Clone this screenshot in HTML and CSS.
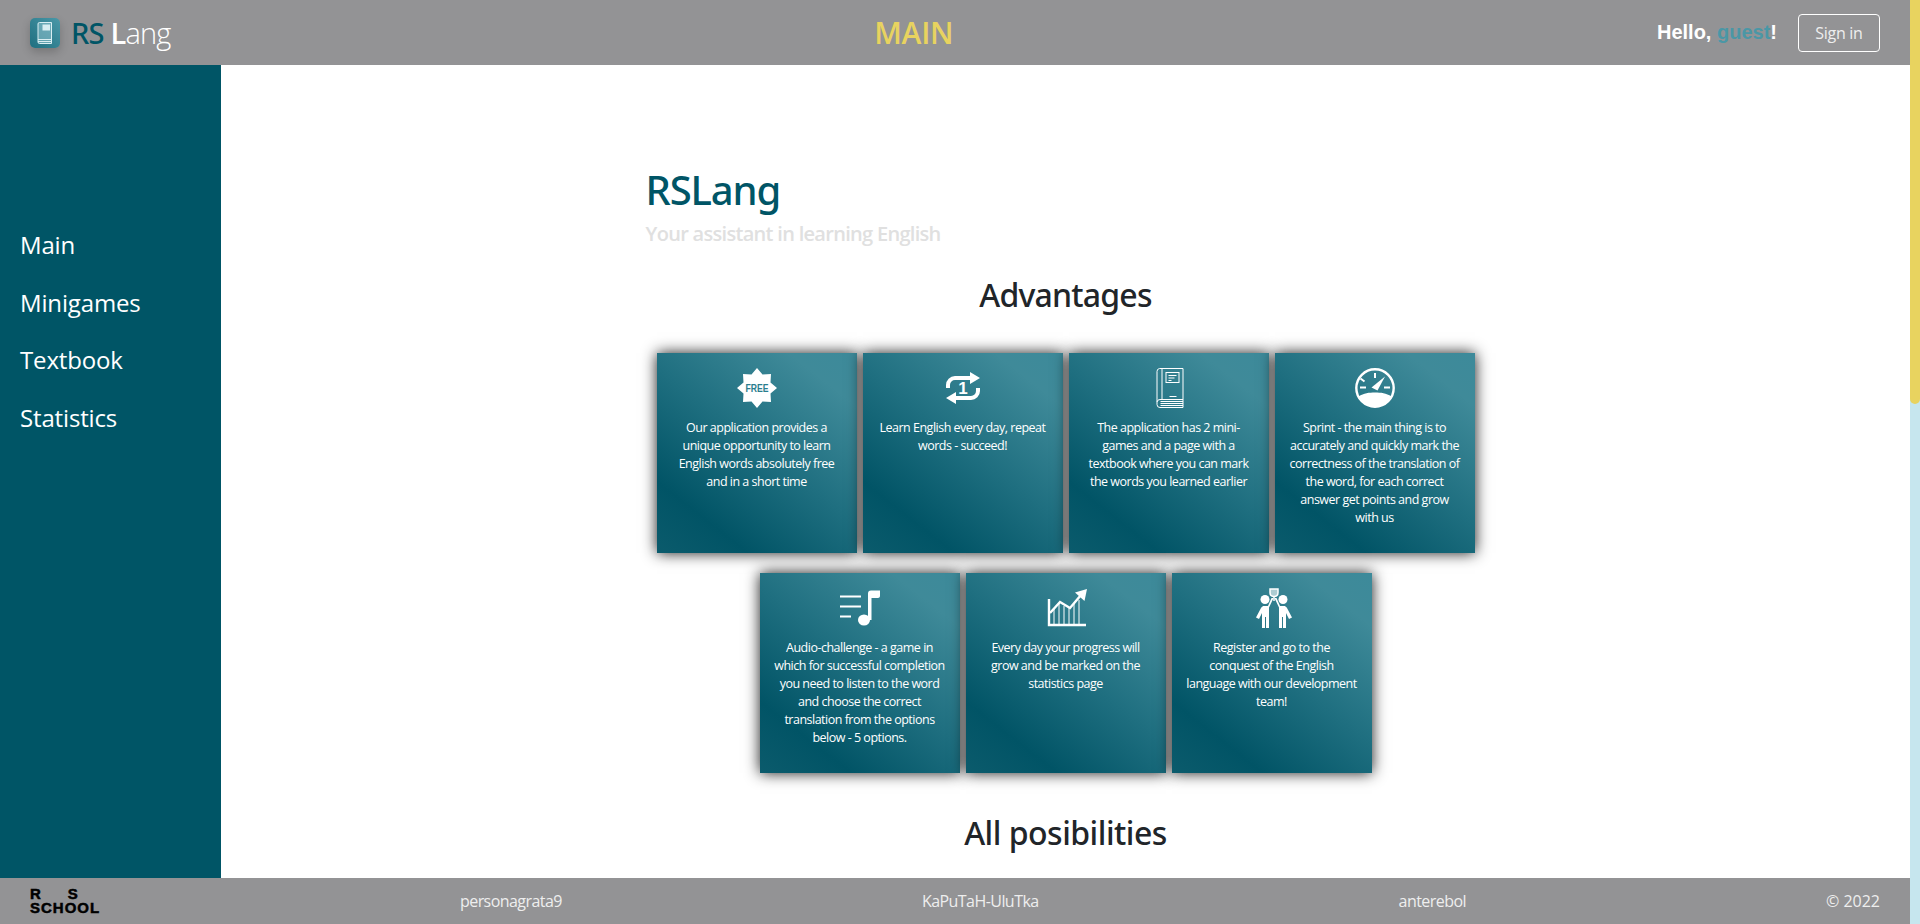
FILE: index.html
```html
<!DOCTYPE html>
<html>
<head>
  <title>RS Lang</title>
  <link rel="stylesheet" href="styles.css">
</head>
<body>
  <div class="page">
    <header class="banner">
      <a class="logo">
        <span class="logoIcon">
          <svg viewBox="0 0 30 30" width="30" height="30" fill="none" stroke="#d9eef2" stroke-width="1">
            <path d="M9.500 4.500h12v21h-12a1.500 1.500 0 0 1-1.500-1.500V6a1.500 1.500 0 0 1 1.500-1.500z" fill="#8fc3cd" fill-opacity=".55"/>
            <rect x="13" y="7" width="6.500" height="5" fill="#d9eef2"/>
            <path d="M8 21.500h13.500M8 23.500h13.500"/>
          </svg>
        </span>
        <span class="logoText"><span class="logoRs">RS</span> <b>L</b>ang</span>
      </a>
      <div class="pageTitle">MAIN</div>
      <div class="userBox">
        <span class="hello">Hello, <span class="guest">guest</span>!</span>
        <button class="signIn">Sign in</button>
      </div>
    </header>

    <div class="middle">
      <nav class="sidebar">
        <a>Main</a>
        <a>Minigames</a>
        <a>Textbook</a>
        <a>Statistics</a>
      </nav>

      <main class="content">
        <div class="container">
          <h1>RSLang</h1>
          <p class="subtitle">Your assistant in learning English</p>
          <h2>Advantages</h2>

          <div class="cards">
            <div class="card">
              <svg class="cardIcon" viewBox="0 0 40 40">
                <polygon fill="#fff" points="20,0 25.500,6.500 34,6 33.500,14.500 40,20 33.500,25.500 34,34 25.500,33.500 20,40 14.500,33.500 6,34 6.500,25.500 0,20 6.500,14.500 6,6 14.500,6.500"/>
                <text class="freeText" x="20" y="24" text-anchor="middle" textLength="23" lengthAdjust="spacingAndGlyphs">FREE</text>
              </svg>
              <p>Our application provides a unique opportunity to learn English words absolutely free and in a short time</p>
            </div>

            <div class="card">
              <svg class="cardIcon" viewBox="0 0 40 40">
                <path d="M5 20v-3a7 7 0 0 1 7-7h17M35 20v3a7 7 0 0 1-7 7H11" fill="none" stroke="#fff" stroke-width="4"/>
                <path d="M27 4l10 6-10 6zM13 24L3 30l10 6z" fill="#fff"/>
                <text class="repeatText" x="20" y="26" text-anchor="middle">1</text>
              </svg>
              <p>Learn English every day, repeat words - succeed!</p>
            </div>

            <div class="card">
              <svg class="cardIcon" viewBox="0 0 40 40" fill="none" stroke="#fff" stroke-width="1">
                <g transform="translate(1.500 0)">
                  <path d="M9 .5h23.500v39H9.500a3 3 0 0 1-3-3v-33a3 3 0 0 1 2.500-3z"/>
                  <path d="M11.500 .5v31M6.500 34a3 3 0 0 1 3-2.500h23"/>
                  <path d="M10 33.500h22.500M10 35.500h22.500M10 37.500h22.500"/>
                  <rect x="15.500" y="4.500" width="13" height="10"/>
                  <path d="M18 7.500h8M18 10h6M18 12.500h3M19 28.500h7"/>
                </g>
              </svg>
              <p>The application has 2 mini-games and a page with a textbook where you can mark the words you learned earlier</p>
            </div>

            <div class="card">
              <svg class="cardIcon" viewBox="0 0 40 40" fill="none" stroke="#fff">
                <circle cx="20" cy="20" r="18.700" stroke-width="2.400"/>
                <path d="M3.500 28.500C9 25 14 24.500 20 24.500s11 .5 16.500 4A18.700 18.700 0 0 1 3.500 28.500z" fill="#fff" stroke="none"/>
                <path d="M20 5v5M5.500 10.500l4 3M5 19.500h6M29 19.500h6" stroke-width="2"/>
                <path d="M16.500 19.500L30 8.500l-7.500 14z" fill="#fff" stroke="none"/>
              </svg>
              <p>Sprint - the main thing is to accurately and quickly mark the correctness of the translation of the word, for each correct answer get points and grow with us</p>
            </div>

            <div class="card">
              <svg class="cardIcon" viewBox="0 0 40 40" fill="none" stroke="#fff">
                <path d="M0 8.500h21M0 18.500h21M0 28.500h11" stroke-width="2"/>
                <ellipse cx="24" cy="32" rx="6" ry="5.500" fill="#fff" stroke="none"/>
                <path d="M28 32V5.500c0-2 1-3 3-3h9v5.500c0 1-1 2-2 2h-6.500V32z" fill="#fff" stroke="none"/>
              </svg>
              <p>Audio-challenge - a game in which for successful completion you need to listen to the word and choose the correct translation from the options below - 5 options.</p>
            </div>

            <div class="card">
              <svg class="cardIcon iconWide" viewBox="0 0 40 40" fill="none" stroke="#fff">
                <g transform="translate(2 0)">
                  <path d="M1 11v26h37" stroke-width="2.400"/>
                  <path d="M6 21v16M11 15v22M16 18v19M21 20v17M26 16v21M31 12v25" stroke-width="1"/>
                  <path d="M2 25L12 14l10 6 11-13" stroke-width="2.400"/>
                  <path d="M27 4.500L39 1l-2.500 12z" fill="#fff" stroke="none"/>
                </g>
              </svg>
              <p>Every day your progress will grow and be marked on the statistics page</p>
            </div>

            <div class="card">
              <svg class="cardIcon iconWide" viewBox="0 0 40 40" fill="none" stroke="#fff">
                <g transform="translate(2 0)">
                  <path d="M16 1h8v3.500c0 2.500-1.500 4-4 4s-4-1.500-4-4z" fill="#fff" fill-opacity=".6" stroke-width="1.500"/>
                  <path d="M20 8.500V13" stroke-width="1.500"/>
                  <circle cx="11" cy="11.500" r="4.500" fill="#fff" stroke="none"/>
                  <circle cx="29" cy="11.500" r="4.500" fill="#fff" stroke="none"/>
                  <path d="M19.500 10l-4.500 9.500V40h-3V29h-1v11H8V25l-3 6-3-1.500 5-9.500c1-1.500 2-2 3-2h4l3.500-8zM20.500 10l4.500 9.500V40h3V29h1v11h3V25l3 6 3-1.500-5-9.500c-1-1.500-2-2-3-2h-4l-3.500-8z" fill="#fff" stroke="none"/>
                </g>
              </svg>
              <p>Register and go to the<br>conquest of the English<br>language with our development<br>team!</p>
            </div>
          </div>

          <h2 class="allTitle">All posibilities</h2>
        </div>
      </main>
    </div>

    <footer class="footer">
      <div class="school"><span>R&nbsp;&nbsp;&nbsp;&nbsp;&nbsp;S</span><span>SCHOOL</span></div>
      <a>personagrata9</a>
      <a>KaPuTaH-UluTka</a>
      <a>anterebol</a>
      <span class="year">© 2022</span>
    </footer>
  </div>

  <div class="scrollBar">
    <div class="scrollThumb"></div>
  </div>
</body>
</html>
```

FILE: styles.css
```css
* {
  box-sizing: border-box;
}

body {
  margin: 0;
  height: 100vh;
  overflow: hidden;
  font-family: "Open Sans", "Noto Sans", sans-serif;
  background-color: #fff;
  display: flex;
}

.page {
  flex: 1;
  min-width: 0;
  display: flex;
  flex-direction: column;
}

.scrollBar {
  width: 10px;
  flex-shrink: 0;
  background-color: #c6e6ee;
}

.scrollThumb {
  height: 404px;
  background-color: #e8d35f;
  border-radius: 0 0 5px 5px;
}

.banner {
  height: 65px;
  flex-shrink: 0;
  padding: 0 30px;
  background-color: #939395;
  display: flex;
  justify-content: space-between;
  align-items: center;
}

.logo {
  display: flex;
  align-items: center;
  gap: 11px;
}

.logoIcon {
  width: 30px;
  height: 30px;
  border-radius: 5px;
  background: linear-gradient(45deg, #1f6f80, #4a98a8);
  box-shadow: 0 4px 10px rgba(0, 0, 0, 0.2);
  display: flex;
}

.logoText {
  font-size: 29px;
  font-weight: 300;
  color: #fff;
  letter-spacing: -0.8px;
}

.logoRs {
  font-family: "Noto Sans", sans-serif;
  color: #005566;
  font-weight: 500;
}

.logoText b {
  font-weight: 600;
}

.pageTitle {
  font-size: 30px;
  font-weight: 600;
  color: #e8d35f;
  letter-spacing: -0.3px;
}

.userBox {
  display: flex;
  align-items: center;
  gap: 21px;
}

.hello {
  font-family: "Liberation Sans", Arial, sans-serif;
  font-size: 20px;
  font-weight: bold;
  color: #fff;
}

.guest {
  color: #4a97a6;
}

.signIn {
  width: 82px;
  height: 38px;
  padding: 0;
  font-family: inherit;
  font-size: 16px;
  color: #eee;
  letter-spacing: -0.3px;
  background: transparent;
  border: 1px solid #fff;
  border-radius: 4px;
}

.middle {
  flex: 1;
  min-height: 0;
  display: flex;
}

.sidebar {
  width: 221px;
  flex-shrink: 0;
  padding: 163px 20px 0;
  background-color: #005566;
  display: flex;
  flex-direction: column;
  gap: 24px;
}

.sidebar a {
  font-size: 24px;
  line-height: 33.500px;
  color: #fff;
  letter-spacing: -0.15px;
}

.content {
  flex: 1;
  min-width: 0;
  overflow: hidden;
}

.container {
  width: 840px;
  margin: 0 auto;
  padding-top: 98px;
}

h1 {
  margin: 0;
  font-family: "Noto Sans", sans-serif;
  font-size: 40px;
  line-height: 54px;
  font-weight: 500;
  color: #005566;
  letter-spacing: -1.1px;
}

.subtitle {
  margin: 3px 0 0;
  font-size: 20px;
  line-height: 27px;
  font-weight: 600;
  color: #e0e0e0;
  letter-spacing: -0.7px;
}

h2 {
  margin: 26px 0 0;
  font-family: "Noto Sans", sans-serif;
  font-size: 32px;
  line-height: 44px;
  font-weight: 500;
  color: #212529;
  text-align: center;
  letter-spacing: -0.8px;
}

.cards {
  margin-top: 36px;
  display: flex;
  flex-wrap: wrap;
  justify-content: center;
  gap: 20px 6px;
}

.card {
  width: 200px;
  height: 200px;
  padding: 15px 13px 0;
  color: #fff;
  text-align: center;
  background: linear-gradient(38deg, #0b5b6c 0%, #015466 20%, #1f6f80 52%, #3f8a99 85%, #3d8a9a 100%);
  box-shadow: 0 0 14px rgba(0, 0, 0, 0.9);
}

.cardIcon {
  display: block;
  width: 40px;
  height: 40px;
  margin: 0 auto;
}

.iconWide {
  overflow: visible;
}

.card p {
  margin: 11px 0 0;
  font-size: 12.500px;
  line-height: 18px;
  letter-spacing: -0.5px;
}

.freeText {
  font-family: "Liberation Sans", Arial, sans-serif;
  font-size: 11px;
  font-weight: bold;
  fill: #2a7d8e;
}

.repeatText {
  font-family: "Liberation Sans", Arial, sans-serif;
  font-size: 17px;
  font-weight: bold;
  fill: #fff;
}

.allTitle {
  margin-top: 38px;
  letter-spacing: -0.5px;
}

.footer {
  height: 46px;
  flex-shrink: 0;
  padding: 0 30px;
  font-size: 16px;
  color: #eee;
  letter-spacing: -0.55px;
  background-color: #939395;
  display: flex;
  justify-content: space-between;
  align-items: center;
}

.year {
  letter-spacing: 0;
}

.school {
  width: 70px;
  font-family: "Liberation Sans", Arial, sans-serif;
  font-size: 15px;
  font-weight: bold;
  line-height: 14px;
  color: #000;
  letter-spacing: 1px;
  -webkit-text-stroke: 0.5px #000;
  display: flex;
  flex-direction: column;
}
```
